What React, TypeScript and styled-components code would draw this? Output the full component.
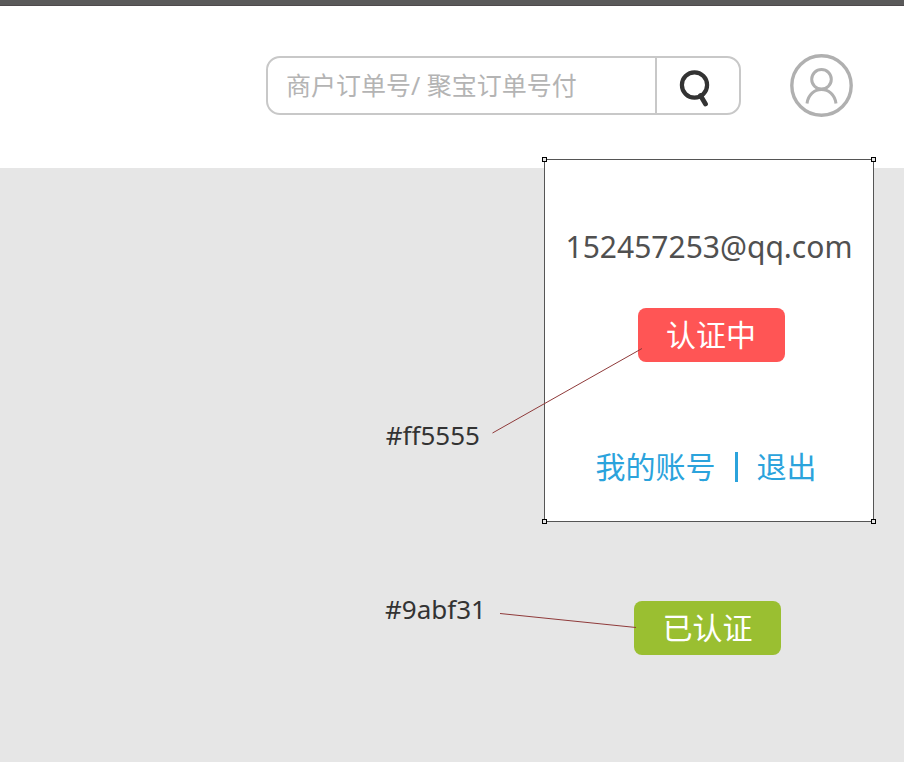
import React from "react";
import styled, { createGlobalStyle } from "styled-components";

const GlobalStyle = createGlobalStyle`
  *, *::before, *::after { box-sizing: border-box; }
  html, body, #root { height: 100%; }
  body {
    margin: 0;
    background: #e6e6e6;
    color: #333;
    font-family: "Noto Sans", "Noto Sans CJK SC", sans-serif;
  }
  button, input { font: inherit; }
`;

const Page = styled.div`
  display: flex;
  flex-direction: column;
  min-height: 100%;
  overflow-x: hidden;
`;

const TopStrip = styled.div`
  height: 6px;
  background: #5a5a5a;
  border-bottom: 1px solid #4e4a4c;
`;

const Header = styled.header`
  display: flex;
  align-items: center;
  justify-content: flex-end;
  gap: 49px;
  padding: 48px 51px 51px;
  background: #fff;
`;

const SearchForm = styled.form`
  display: flex;
  flex: 0 1 475px;
  height: 59px;
  margin: 0;
  border: 2px solid #c8c8c8;
  border-radius: 14px;
  overflow: hidden;
  background: #fff;
`;

const SearchInput = styled.input`
  flex: 1;
  min-width: 0;
  padding: 0 18px 2px;
  border: 0;
  outline: 0;
  background: transparent;
  color: #333;
  font-size: 25px;
  &::placeholder { color: #b4b4b4; opacity: 1; }
`;

const SearchButton = styled.button`
  display: flex;
  align-items: center;
  justify-content: center;
  width: 84px;
  padding: 2px 8px 0 0;
  border: 0;
  border-left: 2px solid #c8c8c8;
  background: transparent;
  cursor: pointer;
`;

const AvatarButton = styled.button`
  display: flex;
  flex: none;
  padding: 0;
  border: 0;
  background: transparent;
  cursor: pointer;
`;

const Board = styled.main`
  display: flex;
  flex: 1;
  flex-direction: column;
  align-items: flex-end;
  gap: 79px;
  padding: 0 30px 48px;
`;

const AccountPanel = styled.section`
  position: relative;
  display: flex;
  flex-direction: column;
  align-items: center;
  width: 330px;
  margin-top: -9px;
  padding: 66px 0 32px;
  border: 1px solid #555;
  background: #fff;
`;

const Handle = styled.i<{ $v: "top" | "bottom"; $h: "left" | "right" }>`
  position: absolute;
  ${(p) => p.$v}: -3px;
  ${(p) => p.$h}: -3px;
  width: 5px;
  height: 5px;
  border: 1px solid #000;
  background: #e6e6e6;
`;

const Email = styled.p`
  margin: 0;
  color: #505050;
  font-size: 30px;
  line-height: 42px;
`;

const Badge = styled.button<{ $color: string }>`
  width: 147px;
  height: 54px;
  padding: 0;
  border: 0;
  border-radius: 8px;
  background: ${(p) => p.$color};
  color: #fff;
  font-size: 30px;
  line-height: 54px;
  cursor: pointer;
`;

const PanelBadge = styled.div`
  display: flex;
  margin: 40px 0 83px;
  padding-left: 4px;
`;

const Links = styled.nav`
  display: flex;
  align-items: center;
  gap: 19px;
  padding-right: 6px;
  color: #2ba3dc;
  font-size: 30px;
  line-height: 44px;
`;

const Link = styled.a`
  color: inherit;
  text-decoration: none;
`;

const Divider = styled.span`
  width: 3px;
  height: 30px;
  background: #2ba3dc;
`;

const ColorCode = styled.span`
  font-size: 26px;
  line-height: 36px;
  color: #333;
`;

const PanelCallout = styled.div`
  position: absolute;
  top: 188px;
  right: 231px;
  display: flex;
  align-items: flex-end;
  gap: 12px;
  pointer-events: none;
`;

const VerifiedRow = styled.div`
  display: flex;
  align-items: flex-start;
  padding-right: 93px;
`;

const CodeBox = styled.div`
  margin-top: -10px;
  padding-right: 14px;
`;

const LeaderLine = styled.svg`
  display: block;
  flex: none;
  overflow: visible;
`;

const VerifiedLine = styled(LeaderLine)`
  z-index: 1;
  margin: 12px -2px 0 0;
`;

function SearchIcon() {
  return (
    <svg width="34" height="40" viewBox="0 0 34 40" fill="none" stroke="#333" aria-hidden="true">
      <circle cx="17.5" cy="18" r="12.6" strokeWidth="4.2" />
      <path d="M23.5 28.5 28.5 37" strokeWidth="4.8" strokeLinecap="round" />
    </svg>
  );
}

function UserIcon() {
  return (
    <svg width="63" height="63" viewBox="0 0 63 63" fill="none" stroke="#b0b0b0" aria-hidden="true">
      <circle cx="31.5" cy="31.5" r="29.7" strokeWidth="3.4" />
      <circle cx="31.5" cy="25.3" r="9.8" strokeWidth="3" />
      <path d="M17 49.5C18.2 40.5 24.5 35.6 31.5 35.6S44.8 40.5 46 49.5" strokeWidth="3" />
    </svg>
  );
}

export default function App() {
  return (
    <>
      <GlobalStyle />
      <Page>
        <TopStrip />
        <Header>
          <SearchForm role="search" onSubmit={(e) => e.preventDefault()}>
            <SearchInput type="text" aria-label="订单号" placeholder="商户订单号/ 聚宝订单号付" />
            <SearchButton type="submit" aria-label="搜索">
              <SearchIcon />
            </SearchButton>
          </SearchForm>
          <AvatarButton type="button" aria-label="账号">
            <UserIcon />
          </AvatarButton>
        </Header>
        <Board>
          <AccountPanel>
            <Email>152457253@qq.com</Email>
            <PanelBadge>
              <Badge type="button" $color="#ff5555">认证中</Badge>
            </PanelBadge>
            <Links>
              <Link href="#account">我的账号</Link>
              <Divider />
              <Link href="#logout">退出</Link>
            </Links>
            <PanelCallout>
              <ColorCode>#ff5555</ColorCode>
              <LeaderLine width="150" height="105" viewBox="0 0 150 105" stroke="#8f3a3a" aria-hidden="true">
                <path d="M0.5 85 150 0.5" />
              </LeaderLine>
            </PanelCallout>
            <Handle $v="top" $h="left" />
            <Handle $v="top" $h="right" />
            <Handle $v="bottom" $h="left" />
            <Handle $v="bottom" $h="right" />
          </AccountPanel>
          <VerifiedRow>
            <CodeBox>
              <ColorCode>#9abf31</ColorCode>
            </CodeBox>
            <VerifiedLine width="136" height="16" viewBox="0 0 136 16" stroke="#8f3a3a" aria-hidden="true">
              <path d="M0 0.5 136 14.5" />
            </VerifiedLine>
            <Badge type="button" $color="#9abf31">已认证</Badge>
          </VerifiedRow>
        </Board>
      </Page>
    </>
  );
}
